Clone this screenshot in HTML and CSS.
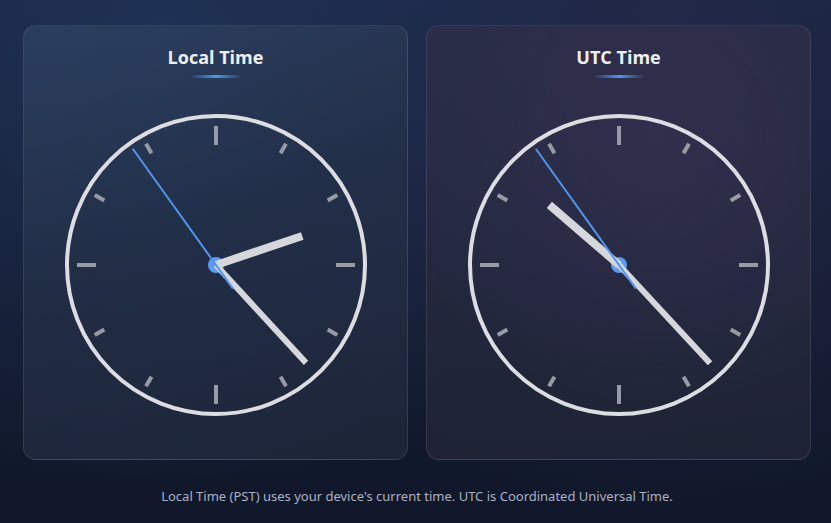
FILE: index.html
```html
<!DOCTYPE html>
<html>
<head>
<meta charset="utf-8">
<link rel="stylesheet" href="styles.css">
</head>
<body>
<main class="page">
  <section class="clocks">
    <article class="card card-local">
      <h2 class="card-title">Local Time</h2>
      <div class="title-bar"></div>
      <svg class="clock" viewBox="-155 -155 310 310" width="310" height="310">
        <circle class="face" r="149"/>
        <g class="ticks">
          <line class="major" y1="-120" y2="-139" transform="rotate(0)"/>
          <line class="minor" y1="-129" y2="-140" transform="rotate(30)"/>
          <line class="minor" y1="-129" y2="-140" transform="rotate(60)"/>
          <line class="major" y1="-120" y2="-139" transform="rotate(90)"/>
          <line class="minor" y1="-129" y2="-140" transform="rotate(120)"/>
          <line class="minor" y1="-129" y2="-140" transform="rotate(150)"/>
          <line class="major" y1="-120" y2="-139" transform="rotate(180)"/>
          <line class="minor" y1="-129" y2="-140" transform="rotate(210)"/>
          <line class="minor" y1="-129" y2="-140" transform="rotate(240)"/>
          <line class="major" y1="-120" y2="-139" transform="rotate(270)"/>
          <line class="minor" y1="-129" y2="-140" transform="rotate(300)"/>
          <line class="minor" y1="-129" y2="-140" transform="rotate(330)"/>
        </g>
        <circle class="pin" r="8"/>
        <line class="hour" y1="0" y2="-91" transform="rotate(71.4)"/>
        <line class="minute" y1="0" y2="-133" transform="rotate(137.4)"/>
        <line class="second" y1="29" y2="-143" transform="rotate(324.4)"/>
      </svg>
    </article>
    <article class="card card-utc">
      <h2 class="card-title">UTC Time</h2>
      <div class="title-bar"></div>
      <svg class="clock" viewBox="-155 -155 310 310" width="310" height="310">
        <circle class="face" r="149"/>
        <g class="ticks">
          <line class="major" y1="-120" y2="-139" transform="rotate(0)"/>
          <line class="minor" y1="-129" y2="-140" transform="rotate(30)"/>
          <line class="minor" y1="-129" y2="-140" transform="rotate(60)"/>
          <line class="major" y1="-120" y2="-139" transform="rotate(90)"/>
          <line class="minor" y1="-129" y2="-140" transform="rotate(120)"/>
          <line class="minor" y1="-129" y2="-140" transform="rotate(150)"/>
          <line class="major" y1="-120" y2="-139" transform="rotate(180)"/>
          <line class="minor" y1="-129" y2="-140" transform="rotate(210)"/>
          <line class="minor" y1="-129" y2="-140" transform="rotate(240)"/>
          <line class="major" y1="-120" y2="-139" transform="rotate(270)"/>
          <line class="minor" y1="-129" y2="-140" transform="rotate(300)"/>
          <line class="minor" y1="-129" y2="-140" transform="rotate(330)"/>
        </g>
        <circle class="pin" r="8"/>
        <line class="hour" y1="0" y2="-92" transform="rotate(310.8)"/>
        <line class="minute" y1="0" y2="-134" transform="rotate(137.2)"/>
        <line class="second" y1="29" y2="-143" transform="rotate(324.4)"/>
      </svg>
    </article>
  </section>
  <p class="note">Local Time (PST) uses your device's current time. UTC is Coordinated Universal Time.</p>
</main>
</body>
</html>
```
FILE: styles.css
```css
html, body {
  margin: 0;
  padding: 0;
  height: 100%;
}
body {
  font-family: "Open Sans", "Noto Sans", sans-serif;
  background:
    radial-gradient(circle at 20% 10%, rgba(38, 62, 105, 0.55), transparent 55%),
    radial-gradient(circle at 80% 20%, rgba(52, 48, 92, 0.4), transparent 55%),
    linear-gradient(180deg, #18243f 0%, #121a2d 70%, #10172a 100%);
  color: #e5e7eb;
  overflow: hidden;
}
.page {
  padding: 25px 20px 0 23px;
}
.clocks {
  display: grid;
  grid-template-columns: 385px 385px;
  gap: 18px;
}
.card {
  box-sizing: border-box;
  height: 435px;
  border-radius: 13px;
  border: 1px solid rgba(255, 255, 255, 0.1);
  display: flex;
  flex-direction: column;
  align-items: center;
  padding-top: 19px;
}
.card-local {
  background:
    linear-gradient(160deg, rgba(48, 68, 100, 0.75) 0%, rgba(38, 50, 74, 0.7) 45%, rgba(34, 41, 60, 0.75) 100%);
}
.card-utc {
  background:
    radial-gradient(circle at 60% 25%, rgba(50, 48, 78, 0.85), transparent 70%),
    linear-gradient(170deg, rgba(44, 46, 72, 0.8) 0%, rgba(36, 40, 60, 0.8) 60%, rgba(33, 38, 54, 0.8) 100%);
}
.card-title {
  margin: 0;
  font-size: 18px;
  line-height: 24px;
  font-weight: 700;
  color: #eef0f5;
}
.title-bar {
  width: 52px;
  height: 3px;
  margin-top: 6px;
  border-radius: 2px;
  background: linear-gradient(90deg, rgba(79, 149, 240, 0), #4f95f0 50%, rgba(79, 149, 240, 0));
}
.clock {
  margin-top: 32px;
  display: block;
}
.face {
  fill: none;
  stroke: #dcdde2;
  stroke-width: 4;
}
.ticks line {
  stroke: #969ba6;
  stroke-width: 4;
}
.pin {
  fill: #5b9cf0;
}
.hour {
  stroke: #d6d7dc;
  stroke-width: 8;
}
.minute {
  stroke: #d6d7dc;
  stroke-width: 6;
}
.second {
  stroke: #4f95ee;
  stroke-width: 2;
}
.note {
  margin: 27px 0 0;
  text-align: center;
  font-family: "Noto Sans", "Open Sans", sans-serif;
  font-size: 13px;
  line-height: 18px;
  color: #aab2c2;
}
```
